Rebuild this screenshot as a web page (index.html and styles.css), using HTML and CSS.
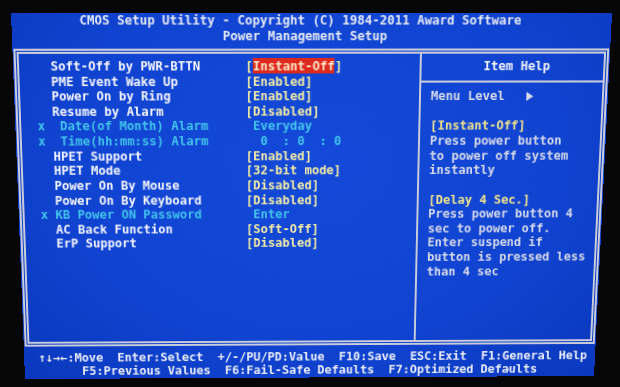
FILE: index.html
```html
<!DOCTYPE html>
<html lang="en">
<head>
  <meta charset="UTF-8">
  <meta name="viewport" content="width=device-width, initial-scale=1.0">
  <title>CMOS Setup Utility - Power Management Setup</title>
  <link rel="stylesheet" href="styles.css">
</head>
<body>
  <!-- 80x25 text screen, tilted like the photo of the monitor -->
  <div class="screen">
    <header class="title">
      <div class="title-line t1">CMOS Setup Utility - Copyright (C) 1984-2011 Award Software</div>
      <div class="title-line t2">Power Management Setup</div>
    </header>

    <div class="frame">
      <!-- Settings list -->
      <div class="menu">
        <div class="row"><span class="mark"></span><span class="label">Soft-Off by PWR-BTTN</span><span class="value">[<span class="sel">Instant-Off</span>]</span></div>
        <div class="row"><span class="mark"></span><span class="label">PME Event Wake Up</span><span class="value">[Enabled]</span></div>
        <div class="row"><span class="mark"></span><span class="label">Power On by Ring</span><span class="value">[Enabled]</span></div>
        <div class="row"><span class="mark"></span><span class="label">Resume by Alarm</span><span class="value">[Disabled]</span></div>
        <div class="row off"><span class="mark">x</span><span class="label"> Date(of Month) Alarm</span><span class="value"> Everyday</span></div>
        <div class="row off"><span class="mark">x</span><span class="label"> Time(hh:mm:ss) Alarm</span><span class="value">  0  : 0  : 0</span></div>
        <div class="row"><span class="mark"></span><span class="label">HPET Support</span><span class="value">[Enabled]</span></div>
        <div class="row"><span class="mark"></span><span class="label">HPET Mode</span><span class="value">[32-bit mode]</span></div>
        <div class="row"><span class="mark"></span><span class="label">Power On By Mouse</span><span class="value">[Disabled]</span></div>
        <div class="row"><span class="mark"></span><span class="label">Power On By Keyboard</span><span class="value">[Disabled]</span></div>
        <div class="row off"><span class="mark">x</span><span class="label">KB Power ON Password</span><span class="value"> Enter</span></div>
        <div class="row"><span class="mark"></span><span class="label">AC Back Function</span><span class="value">[Soft-Off]</span></div>
        <div class="row"><span class="mark"></span><span class="label">ErP Support</span><span class="value">[Disabled]</span></div>
      </div>

      <!-- Item help panel -->
      <div class="help">
        <div class="help-head">Item Help</div>
        <div class="help-body">
          <div class="line">Menu Level   <svg class="arrow" width="7" height="9" viewBox="0 0 7 9"><polygon points="0,0 7,4.5 0,9" fill="#d6daea"/></svg></div>
          <div class="line"></div>
          <div class="line opt">[Instant-Off]</div>
          <div class="line">Press power button</div>
          <div class="line">to power off system</div>
          <div class="line">instantly</div>
          <div class="line"></div>
          <div class="line opt">[Delay 4 Sec.]</div>
          <div class="line">Press power button 4</div>
          <div class="line">sec to power off.</div>
          <div class="line">Enter suspend if</div>
          <div class="line">button is pressed less</div>
          <div class="line">than 4 sec</div>
        </div>
      </div>
    </div>

    <footer class="keys">
      <div class="key-line k1">↑↓→←:Move  Enter:Select  +/-/PU/PD:Value  F10:Save  ESC:Exit  F1:General Help</div>
      <div class="key-line k2">F5:Previous Values  F6:Fail-Safe Defaults  F7:Optimized Defaults</div>
    </footer>
  </div>
</body>
</html>
```

FILE: styles.css
```css
body {
  margin: 0;
  width: 620px;
  height: 387px;
  overflow: hidden;
  background-color: #060607;
}

/* one text cell is 7.5px x 14.64px */
.screen {
  width: 600px;
  height: 366px;
  overflow: hidden;
  transform-origin: 0 0;
  transform: matrix3d(1.010573, 0.000189, 0, 0.00001455, 0.042112, 1.058522, 0, 0.00015441, 0, 0, 1, 0, 11, 13, 0, 1);
  background: radial-gradient(ellipse at 50% 40%, #1449d9 0%, #1043d0 60%, #0b38bd 100%);
  font-family: "DejaVu Sans Mono", "Liberation Mono", monospace;
  font-weight: bold;
  font-size: 12.45px;
  line-height: 14.64px;
  color: #eef1fb;
}

.title-line,
.label,
.value,
.mark,
.help-head,
.line,
.key-line {
  white-space: pre;
}

.title-line {
  height: 14.64px;
  color: #e4e9f6;
}
.t1 {
  padding-left: 67.5px;
}
.t2 {
  padding-left: 210px;
}

.frame {
  display: flex;
  box-sizing: border-box;
  height: 297.8px;
  margin: 4.82px 1.25px 0;
  border: 5px double #c9cddb;
}

.menu {
  width: 401.5px;
  padding: 4.82px 0 0 16.25px;
  box-sizing: border-box;
}
.row {
  display: grid;
  grid-template-columns: 15px 195px auto;
  height: 14.64px;
}
.label {
  color: #f3f5ff;
}
.value {
  color: #f3eca6;
}
.sel {
  background-color: #dc2a1f;
  color: #fde6c4;
}
.off .mark,
.off .label,
.off .value {
  color: #42c3ec;
}

.help {
  flex: 1;
  border-left: 2px solid #c9cddb;
}
.help-head {
  padding: 4.82px 0 6.32px 62.75px;
  border-bottom: 2px solid #c9cddb;
  color: #eef1fb;
}
.help-body {
  padding: 6.32px 0 0 10.25px;
  color: #d6daea;
}
.line {
  height: 14.64px;
}
.opt {
  color: #efe48e;
}
.arrow {
  vertical-align: -1px;
}

.keys {
  padding-top: 4.82px;
  color: #eaeefa;
}
.key-line {
  height: 14.64px;
}
.k1 {
  padding-left: 15px;
}
.k2 {
  padding-left: 60px;
}
```
